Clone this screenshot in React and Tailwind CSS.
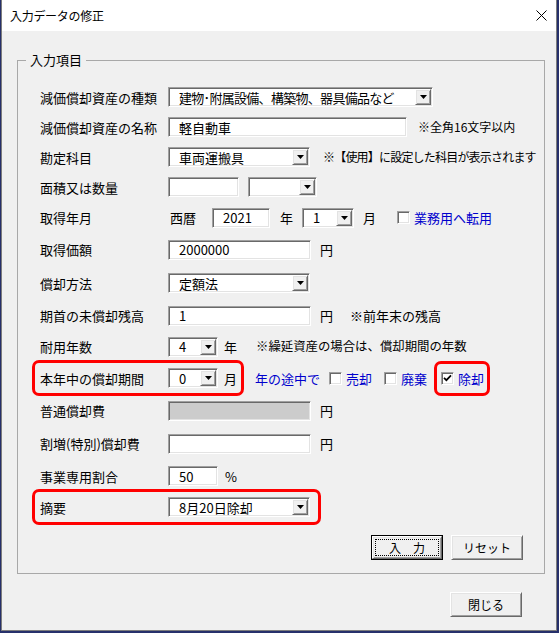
import React from "react";

const sunken =
  "border border-t-[#a0a0a0] border-l-[#a0a0a0] border-r-white border-b-white shadow-[inset_1px_1px_0_#696969,inset_-1px_-1px_0_#e3e3e3]";
const raised =
  "border border-t-white border-l-white border-r-[#696969] border-b-[#696969] shadow-[inset_1px_1px_0_#e3e3e3,inset_-1px_-1px_0_#a0a0a0] bg-[#f0f0f0]";

function TextBox({ className, value, disabled }) {
  return (
    <div
      className={`${sunken} h-[20px] shrink-0 flex items-center pl-[10px] text-[13px] leading-none ${
        disabled ? "bg-[#cccccc]" : "bg-white"
      } ${className}`}
    >
      {value}
    </div>
  );
}

function Combo({ className, value, textClass = "" }) {
  return (
    <div
      className={`${sunken} bg-white h-[20px] shrink-0 flex items-center pl-[10px] pr-[1px] text-[13px] leading-none ${className}`}
    >
      <span className={`flex-1 whitespace-nowrap ${textClass}`}>{value}</span>
      <span className={`${raised} w-[16px] h-[16px] shrink-0 flex items-center justify-center`}>
        <svg width="7" height="4" viewBox="0 0 7 4">
          <path d="M0 0h7L3.5 4z" fill="#000" />
        </svg>
      </span>
    </div>
  );
}

function Check({ checked }) {
  return (
    <span className={`${sunken} bg-white w-[13px] h-[13px] shrink-0 flex items-center justify-center`}>
      {checked && (
        <svg width="9" height="8" viewBox="0 0 9 8">
          <path d="M1 3.8l2.4 2.4L8 1.4" stroke="#000" strokeWidth="1.7" fill="none" />
        </svg>
      )}
    </span>
  );
}

function Row({ h, label, children }) {
  return (
    <div className={`relative flex items-center ${h}`}>
      <span className="w-[128px] shrink-0 whitespace-nowrap">{label}</span>
      {children}
    </div>
  );
}

function Btn({ children, isDefault }) {
  if (isDefault) {
    return (
      <div className="w-[72px] h-[25px] border border-black flex">
        <div className={`${raised} flex-1 flex p-[2px]`}>
          <div className="flex-1 border border-dotted border-black flex items-center justify-center text-[12px] leading-none">
            {children}
          </div>
        </div>
      </div>
    );
  }
  return (
    <div className={`${raised} w-[72px] h-[25px] flex items-center justify-center text-[12px] leading-none`}>
      {children}
    </div>
  );
}

export default function App() {
  return (
    <div className="w-[559px] h-[633px] bg-[#26306b] overflow-hidden font-['Noto_Sans_CJK_JP','Noto_Sans',sans-serif] text-black">
      <div className="ml-px w-[556px] h-[631px] bg-[#f0f0f0] border-x border-b border-[#7d7d7d] flex flex-col">
        {/* title bar */}
        <div className="h-[31px] bg-white flex items-center pl-[8px] pr-[7px] shrink-0">
          <span className="text-[12px] leading-none tracking-[-0.3px]">入力データの修正</span>
          <span className="ml-auto w-[12px] h-[12px] flex items-center justify-center mr-[2px]">
            <svg width="11" height="11" viewBox="0 0 11 11">
              <path d="M0.5 0.5l10 10M10.5 0.5l-10 10" stroke="#000" strokeWidth="1" />
            </svg>
          </span>
        </div>

        <fieldset className="ml-[15px] mt-[20px] w-[528px] h-[523px] border border-[#a8a8a8] shrink-0">
          <legend className="ml-[8px] px-[4px] text-[13px] leading-[18px]">入力項目</legend>

          <div className="pt-[13px] pl-[22px] text-[13px] leading-none">
            <Row h="h-[30px]" label="減価償却資産の種類">
              <Combo
                className="w-[265px]"
                textClass="tracking-[-0.7px]"
                value="建物･附属設備、構築物、器具備品など"
              />
            </Row>
            <Row h="h-[30px]" label="減価償却資産の名称">
              <TextBox className="w-[239px]" value="軽自動車" />
              <span className="ml-[11px] text-[12px] whitespace-nowrap">※全角16文字以内</span>
            </Row>
            <Row h="h-[30px]" label="勘定科目">
              <Combo className="w-[142px]" value="車両運搬具" />
              <span className="ml-[13px] text-[12px] tracking-[-0.8px] whitespace-nowrap">
                ※【使用】に設定した科目が表示されます
              </span>
            </Row>
            <Row h="h-[30px]" label="面積又は数量">
              <TextBox className="w-[71px]" value="" />
              <Combo className="ml-[9px] w-[69px]" value="" />
            </Row>
            <Row h="h-[31px]" label="取得年月">
              <span className="pl-[2px] w-[44px] shrink-0">西暦</span>
              <TextBox className="w-[58px]" value="2021" />
              <span className="pl-[10px] w-[32px] shrink-0">年</span>
              <Combo className="w-[52px]" value="1" />
              <span className="pl-[9px] w-[43px] shrink-0">月</span>
              <Check />
              <span className="ml-[4px] text-[#0000cd] whitespace-nowrap">業務用へ転用</span>
            </Row>
            <Row h="h-[33px]" label="取得価額">
              <TextBox className="w-[143px]" value="2000000" />
              <span className="ml-[9px]">円</span>
            </Row>
            <Row h="h-[34px]" label="償却方法">
              <Combo className="w-[142px]" value="定額法" />
            </Row>
            <Row h="h-[31px]" label="期首の未償却残高">
              <TextBox className="w-[143px]" value="1" />
              <span className="ml-[9px]">円</span>
              <span className="ml-[17px] whitespace-nowrap">※前年末の残高</span>
            </Row>
            <Row h="h-[31px]" label="耐用年数">
              <Combo className="w-[50px]" value="4" />
              <span className="pl-[6px] w-[38px] shrink-0">年</span>
              <span className="text-[12.4px] whitespace-nowrap">※繰延資産の場合は、償却期間の年数</span>
            </Row>
            <Row h="h-[32px]" label="本年中の償却期間">
              <Combo className="w-[50px]" value="0" />
              <span className="pl-[6px] w-[37px] shrink-0">月</span>
              <span className="w-[74px] shrink-0 text-[#0000cd] whitespace-nowrap">年の途中で</span>
              <span className="w-[55px] shrink-0 flex items-center">
                <Check />
                <span className="ml-[4px] text-[#0000cd]">売却</span>
              </span>
              <span className="w-[57px] shrink-0 flex items-center">
                <Check />
                <span className="ml-[4px] text-[#0000cd]">廃棄</span>
              </span>
              <span className="flex items-center">
                <Check checked />
                <span className="ml-[4px] text-[#0000cd]">除却</span>
              </span>
              <span className="absolute left-[-8px] top-[-2px] w-[212px] h-[36px] border-[3px] border-[#ff0000] rounded-[7px] pointer-events-none" />
              <span className="absolute left-[394px] top-[-1px] w-[56px] h-[35px] border-[3px] border-[#ff0000] rounded-[7px] pointer-events-none" />
            </Row>
            <Row h="h-[33px]" label="普通償却費">
              <TextBox className="w-[143px]" value="" disabled />
              <span className="ml-[9px]">円</span>
            </Row>
            <Row h="h-[33px]" label="割増(特別)償却費">
              <TextBox className="w-[143px]" value="" />
              <span className="ml-[9px]">円</span>
            </Row>
            <Row h="h-[32px]" label="事業専用割合">
              <TextBox className="w-[50px]" value="50" />
              <span className="ml-[7px]">%</span>
            </Row>
            <Row h="h-[30px]" label="摘要">
              <Combo className="w-[142px]" value="8月20日除却" />
              <span className="absolute left-[-8px] top-[-3px] w-[289px] h-[36px] border-[3px] border-[#ff0000] rounded-[7px] pointer-events-none" />
            </Row>
          </div>

          <div className="mt-[13px] pr-[21px] flex justify-end gap-[8px]">
            <Btn isDefault>入　力</Btn>
            <Btn>リセット</Btn>
          </div>
        </fieldset>

        <div className="mt-[18px] pr-[34px] flex justify-end">
          <Btn>閉じる</Btn>
        </div>
      </div>
    </div>
  );
}
